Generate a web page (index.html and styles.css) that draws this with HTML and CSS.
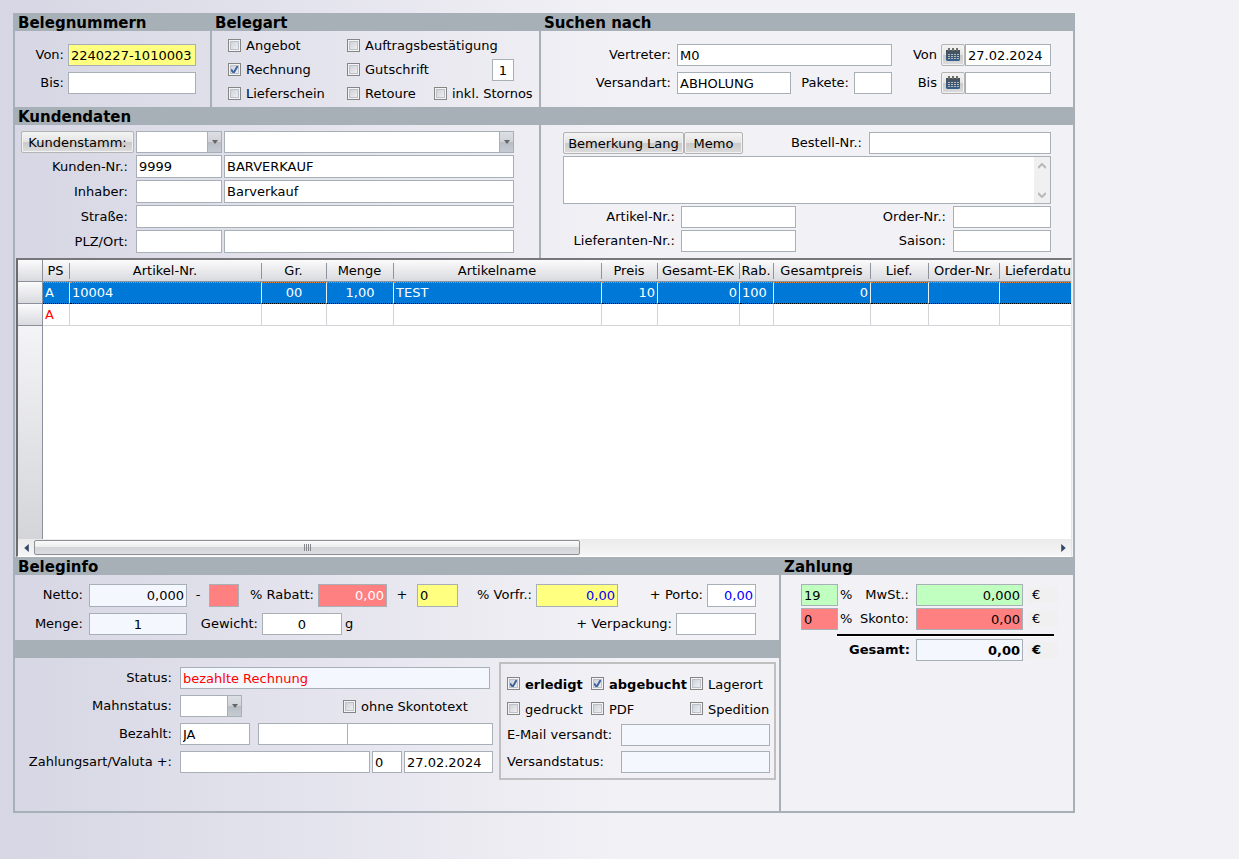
FILE: index.html
```html
<!DOCTYPE html>
<html lang="de">
<head>
<meta charset="utf-8">
<title>Belegsuche</title>
<link rel="stylesheet" href="styles.css">
</head>
<body>
<svg class="defs" aria-hidden="true">
  <linearGradient id="cal-fill" x1="0" y1="0" x2="0" y2="1"><stop offset="0" stop-color="#4a5058"/><stop offset="1" stop-color="#35608f"/></linearGradient>
  <symbol id="calendar" viewBox="0 0 16 16">
    <path d="M1 3h14v10l-1 1H2l-1-1z" fill="url(#cal-fill)"/>
    <path d="M3 1h2v3H3zM7 1h2v3H7zM11 1h2v3h-2z" fill="#6d6f68"/>
    <path d="M3 7h2v1H3zM6 7h2v1H6zM9 7h2v1H9zM12 7h2v1h-2zM3 9h2v1H3zM6 9h2v1H6zM9 9h2v1H9zM12 9h2v1h-2zM3 11h2v1H3zM6 11h2v1H6zM9 11h2v1H9zM12 11h2v1h-2z" fill="#b9b9b4"/>
  </symbol>
</svg>
<main class="frame">
  <div class="bar bar-search">
    <h2>Belegnummern</h2><h2>Belegart</h2><h2>Suchen nach</h2>
  </div>
  <div class="row row-search">
    <section class="numbers">
      <label for="nr-von">Von:</label><input class="field yellow" id="nr-von" value="2240227-1010003">
      <label for="nr-bis">Bis:</label><input class="field" id="nr-bis">
    </section>
    <section class="kinds">
      <label class="check"><input type="checkbox">Angebot</label>
      <label class="check span2"><input type="checkbox">Auftragsbestätigung</label>
      <label class="check"><input type="checkbox" checked>Rechnung</label>
      <label class="check"><input type="checkbox">Gutschrift</label>
      <input class="field center count" aria-label="Anzahl" value="1">
      <label class="check"><input type="checkbox">Lieferschein</label>
      <label class="check"><input type="checkbox">Retoure</label>
      <label class="check"><input type="checkbox">inkl. Stornos</label>
    </section>
    <section class="lookup">
      <label for="vertreter">Vertreter:</label>
      <input class="field" id="vertreter" value="M0">
      <label for="date-von">Von</label>
      <button class="btn icon" aria-label="Kalender Von"><svg><use href="#calendar"/></svg></button>
      <input class="field" id="date-von" value="27.02.2024">
      <label for="versandart">Versandart:</label>
      <div class="shipping">
        <input class="field" id="versandart" value="ABHOLUNG">
        <label for="pakete">Pakete:</label>
        <input class="field packages" id="pakete">
      </div>
      <label for="date-bis">Bis</label>
      <button class="btn icon" aria-label="Kalender Bis"><svg><use href="#calendar"/></svg></button>
      <input class="field" id="date-bis">
    </section>
  </div>

  <div class="bar"><h2>Kundendaten</h2></div>
  <div class="row row-customer">
    <section class="customer">
      <button class="btn">Kundenstamm:</button>
      <span class="combo"><select aria-label="Kundennummer wählen"><option></option></select></span>
      <span class="combo"><select aria-label="Kundenname wählen"><option></option></select></span>
      <label for="kunden-nr">Kunden-Nr.:</label>
      <input class="field" id="kunden-nr" value="9999">
      <input class="field" aria-label="Kundenname" value="BARVERKAUF">
      <label for="inhaber">Inhaber:</label>
      <input class="field" id="inhaber">
      <input class="field" aria-label="Inhabername" value="Barverkauf">
      <label for="strasse">Straße:</label>
      <input class="field span2" id="strasse">
      <label for="plz">PLZ/Ort:</label>
      <input class="field" id="plz">
      <input class="field" aria-label="Ort">
    </section>
    <section class="order">
      <div class="line">
        <button class="btn remark">Bemerkung Lang</button><button class="btn memo">Memo</button>
        <label class="push" for="bestell-nr">Bestell-Nr.:</label>
        <input class="field" id="bestell-nr">
      </div>
      <div class="memo-box">
        <textarea aria-label="Bemerkung"></textarea>
        <span class="vscroll" aria-hidden="true">
          <svg viewBox="0 0 8 6"><path d="M0 5 4 1 8 5" /></svg>
          <svg viewBox="0 0 8 6"><path d="M0 1 4 5 8 1" /></svg>
        </span>
      </div>
      <div class="line pair">
        <label for="artikel-nr">Artikel-Nr.:</label><input class="field" id="artikel-nr">
        <label class="push" for="order-nr">Order-Nr.:</label><input class="field short" id="order-nr">
      </div>
      <div class="line pair">
        <label for="lief-nr">Lieferanten-Nr.:</label><input class="field" id="lief-nr">
        <label class="push" for="saison">Saison:</label><input class="field short" id="saison">
      </div>
    </section>
  </div>

  <div class="grid-box">
    <div class="grid-view">
      <table>
        <colgroup>
          <col class="c-head"><col class="c-ps"><col class="c-art"><col class="c-gr"><col class="c-menge"><col class="c-name"><col class="c-preis"><col class="c-ek"><col class="c-rab"><col class="c-ges"><col class="c-lief"><col class="c-order"><col>
        </colgroup>
        <thead>
          <tr><th></th><th>PS</th><th>Artikel-Nr.</th><th>Gr.</th><th>Menge</th><th>Artikelname</th><th>Preis</th><th>Gesamt-EK</th><th>Rab.</th><th>Gesamtpreis</th><th>Lief.</th><th>Order-Nr.</th><th class="left">Lieferdatu</th></tr>
        </thead>
        <tbody>
          <tr class="selected"><th scope="row"></th><td>A</td><td>10004</td><td class="center">00</td><td class="center">1,00</td><td>TEST</td><td class="right">10</td><td class="right">0</td><td>100</td><td class="right">0</td><td></td><td></td><td></td></tr>
          <tr><th scope="row"></th><td class="red-text">A</td><td></td><td></td><td></td><td></td><td></td><td></td><td></td><td></td><td></td><td></td><td></td></tr>
        </tbody>
      </table>
      <div class="gutter"></div>
    </div>
    <div class="hscroll">
      <button aria-label="Nach links"><svg viewBox="0 0 4 7"><path d="M4 0v7L0 3.500z"/></svg></button>
      <div class="track"><div class="thumb"><i></i></div></div>
      <button aria-label="Nach rechts"><svg viewBox="0 0 4 7"><path d="M0 0v7l4-3.500z"/></svg></button>
    </div>
  </div>

  <div class="row row-bottom">
    <div class="info">
      <div class="bar"><h2>Beleginfo</h2></div>
      <section class="totals">
        <div class="line">
          <label class="w-first" for="netto">Netto:</label><input class="field calc right w-98" id="netto" value="0,000">
          <span class="op">-</span><input class="field red w-30" id="rabatt-p" aria-label="Rabatt Prozent">
          <label class="w-rabatt" for="rabatt">% Rabatt:</label><input class="field red right light w-69" id="rabatt" value="0,00">
          <span class="op plus">+</span><input class="field yellow w-41" aria-label="Vorfracht Prozent" value="0">
          <label class="w-vorfr" for="vorfr">% Vorfr.:</label><input class="field yellow right blue-text w-82" id="vorfr" value="0,00">
          <label class="push" for="porto">+ Porto:</label><input class="field right blue-text w-49" id="porto" value="0,00">
        </div>
        <div class="line">
          <label class="w-first" for="menge">Menge:</label><input class="field calc center w-98" id="menge" value="1">
          <label class="w-gewicht" for="gewicht">Gewicht:</label><input class="field center w-80" id="gewicht" value="0">
          <span class="unit">g</span>
          <label class="push" for="verpackung">+ Verpackung:</label><input class="field w-80" id="verpackung">
        </div>
      </section>
      <div class="bar"></div>
      <section class="status">
        <div class="status-form">
          <label for="status">Status:</label>
          <div class="line"><input class="field calc red-text status-field" id="status" value="bezahlte Rechnung"></div>
          <label for="mahn">Mahnstatus:</label>
          <div class="line"><span class="combo w-62"><select id="mahn"><option></option></select></span>
            <label class="check no-skonto"><input type="checkbox">ohne Skontotext</label></div>
          <label for="bezahlt">Bezahlt:</label>
          <div class="line"><input class="field w-70" id="bezahlt" value="JA"><input class="field paid-date" aria-label="Bezahlt am"><input class="field grow" aria-label="Bezahlt Notiz"></div>
          <label for="zahlart">Zahlungsart/Valuta +:</label>
          <div class="line gap2"><input class="field grow" id="zahlart"><input class="field w-30" aria-label="Valuta Tage" value="0"><input class="field valuta-date" aria-label="Valuta Datum" value="27.02.2024"></div>
        </div>
        <div class="flags">
          <div class="flag-grid">
            <label class="check bold"><input type="checkbox" checked>erledigt</label>
            <label class="check bold"><input type="checkbox" checked>abgebucht</label>
            <label class="check"><input type="checkbox">Lagerort</label>
            <label class="check"><input type="checkbox">gedruckt</label>
            <label class="check"><input type="checkbox">PDF</label>
            <label class="check"><input type="checkbox">Spedition</label>
          </div>
          <div class="flag-fields">
            <label for="mail">E-Mail versandt:</label><input class="field calc" id="mail">
            <label for="versand">Versandstatus:</label><input class="field calc" id="versand">
          </div>
        </div>
      </section>
    </div>
    <div class="payment">
      <div class="bar"><h2>Zahlung</h2></div>
      <section class="pay-grid">
        <input class="field green" aria-label="MwSt. Prozent" value="19">
        <label for="mwst"><span>%</span>MwSt.:</label>
        <input class="field green right" id="mwst" value="0,000"><span class="euro">€</span>
        <input class="field red" aria-label="Skonto Prozent" value="0">
        <label for="skonto"><span>%</span>Skonto:</label>
        <input class="field red right" id="skonto" value="0,00"><span class="euro">€</span>
        <hr>
        <label class="bold total" for="gesamt">Gesamt:</label>
        <input class="field calc right bold" id="gesamt" value="0,00"><span class="euro bold">€</span>
      </section>
    </div>
  </div>
</main>
</body>
</html>
```
FILE: styles.css
```css
:root {
  --line: #a8b0b7;
  --calc: #f4f7fd;
  --chrome: linear-gradient(#fbfbfc, #d9dadf);
}
* { box-sizing: border-box; }
body {
  margin: 0;
  padding: 13px;
  min-height: 100vh;
  background: linear-gradient(90deg, #d6d6e4, #f2f1f6 620px);
  font: 13px/16px Verdana, "DejaVu Sans", sans-serif;
  color: #000;
}
.defs { position: absolute; width: 0; height: 0; }
.frame {
  max-width: 1062px;
  border: 2px solid var(--line);
  border-top: 0;
}
input, select, textarea, button { font: inherit; color: inherit; margin: 0; min-width: 0; }
label { white-space: nowrap; }

.bar { height: 18px; background: var(--line); padding-left: 3px; }
h2 { margin: 0; font-size: 15px; line-height: 20px; font-weight: bold; white-space: nowrap; }
.bar-search, .row-search { display: grid; grid-template-columns: 197px 329px minmax(0, 1fr); }
.bar-search { padding-left: 0; }
.bar-search h2 { padding-left: 3px; }

.field {
  height: 22px;
  width: 100%;
  padding: 0 2px;
  border: 1px solid var(--line);
  border-radius: 0;
  background: #fff;
}
.field.yellow { background: #ffff80; }
.field.green { background: #c0ffc0; }
.field.red { background: #ff8080; }
.field.calc { background: var(--calc); }
.center { text-align: center; }
.right { text-align: right; }
.left { text-align: left; }
.field.light { color: #fff; }
.red-text { color: #f00; }
.blue-text { color: #00f; }
.bold { font-weight: bold; }
.span2 { grid-column: span 2; }

.check { display: flex; align-items: center; gap: 5px; }
.check input {
  appearance: none;
  flex: none;
  width: 13px;
  height: 13px;
  margin-bottom: 2px;
  border: 1px solid #858585;
  box-shadow: inset 0 0 0 1px #f4f4f4, inset 0 0 0 2px #bcc0c8;
  background: linear-gradient(135deg, #c6cad3, #f6f6f7);
}
.check input:checked {
  background: url("data:image/svg+xml,%3Csvg xmlns='http://www.w3.org/2000/svg' viewBox='0 0 11 11'%3E%3Cpath d='M2 5.500 4.700 8.800 9 1.200' fill='none' stroke='%233f65a0' stroke-width='2'/%3E%3C/svg%3E") center / 11px no-repeat, linear-gradient(135deg, #c6cad3, #f6f6f7);
}

.btn {
  height: 22px;
  padding: 1px 0 0;
  border: 1px solid #b4b4b4;
  border-radius: 2px;
  box-shadow: inset 0 0 0 1px #f2f2f2;
  background: linear-gradient(#f4f4f4, #e4e4e4 49%, #c9c9c9 50%, #dcdcdc);
  white-space: nowrap;
}
.icon { display: grid; place-items: center; padding: 0; }
.icon svg { width: 16px; height: 16px; }

.combo { position: relative; display: block; }
.combo select {
  appearance: none;
  display: block;
  width: 100%;
  height: 22px;
  border: 1px solid var(--line);
  border-radius: 0;
  background: #fff;
}
.combo::before {
  content: "";
  position: absolute;
  inset: 1px 1px 1px auto;
  width: 13px;
  border-left: 1px solid var(--line);
  background: linear-gradient(#dcdfe3, #cfd3d8 49%, #b8bdc5 50%, #c6cad1);
  pointer-events: none;
}
.combo::after {
  content: "";
  position: absolute;
  right: 4px;
  top: 9px;
  border: 3px solid transparent;
  border-top: 4px solid #666;
  border-bottom: 0;
  pointer-events: none;
}

.row-search > section { min-height: 76px; }
.numbers {
  display: grid;
  grid-template-columns: 49px 128px;
  gap: 6px 4px;
  align-content: start;
  align-items: center;
  padding-top: 13px;
}
.numbers label { text-align: right; }
.row-search .kinds {
  display: grid;
  grid-template-columns: 119px 87px minmax(0, 1fr);
  grid-template-rows: repeat(3, 24px);
  align-items: center;
  padding: 3px 0 1px 16px;
  border-left: 2px solid var(--line);
  margin-left: -2px;
}
.count { width: 22px; justify-self: end; margin-right: 27px; }
.row-search .lookup {
  display: grid;
  grid-template-columns: 136px minmax(0, 1fr) 49px 24px 86px;
  row-gap: 6px;
  align-content: start;
  align-items: center;
  padding: 13px 22px 0 0;
  border-left: 2px solid var(--line);
  margin-left: -2px;
}
.lookup > label { text-align: right; padding-right: 6px; }
.lookup > label[for^="date"] { padding-right: 4px; }
.shipping { display: flex; align-items: center; }
.shipping label { padding: 0 5px 0 10px; }
.packages { flex: 0 0 38px; }

.row-customer { display: grid; grid-template-columns: 524px minmax(0, 1fr); }
.customer {
  display: grid;
  grid-template-columns: 113px 86px minmax(0, 1fr);
  gap: 2px;
  align-items: center;
  padding: 6px 25px 5px 6px;
}
.customer .field { height: 23px; }
.customer label { text-align: right; padding: 1px 6px 0 0; }
.row-customer .order {
  display: flex;
  flex-direction: column;
  gap: 2px;
  padding: 7px 22px 6px;
  border-left: 2px solid var(--line);
}
.line { display: flex; align-items: center; }
.line > * { flex: none; }
.push { margin-left: auto; }
.remark { width: 121px; }
.memo { width: 59px; }
.order .push { padding-right: 7px; }
#bestell-nr { width: 182px; }
.memo-box { display: flex; height: 48px; border: 1px solid var(--line); background: #fff; }
.memo-box textarea { flex: 1; border: 0; padding: 2px; resize: none; overflow: hidden; background: none; }
.vscroll {
  width: 16px;
  background: #f0f0f0;
  display: flex;
  flex-direction: column;
  justify-content: space-between;
  align-items: center;
  padding: 6px 0 5px;
}
.vscroll svg { width: 8px; height: 6px; fill: none; stroke: #b8b8b8; stroke-width: 2; }
.pair label:first-child { width: 118px; padding-right: 6px; text-align: right; }
.pair .field { width: 115px; }
.pair .short { width: 98px; }

.grid-box {
  margin: 0 1px;
  border: 2px solid #6b6b70;
  border-top-color: #77777b;
  border-right: 1px solid #e4e4e4;
  border-bottom: 1px solid #fff;
  background: #fff;
}
.grid-view { height: 279px; overflow: hidden; display: flex; flex-direction: column; }
table { width: 100%; table-layout: fixed; border-collapse: separate; border-spacing: 0; flex: none; }
.c-head { width: 25px; }
.c-ps { width: 27px; }
.c-art { width: 192px; }
.c-gr { width: 65px; }
.c-menge { width: 67px; }
.c-name { width: 208px; }
.c-preis { width: 56px; }
.c-ek { width: 82px; }
.c-rab { width: 34px; }
.c-ges { width: 97px; }
.c-lief { width: 58px; }
.c-order { width: 71px; }
th, td { height: 22px; padding: 0; white-space: nowrap; overflow: hidden; font-weight: normal; }
thead th {
  border-bottom: 1px solid #8b919c;
  padding-right: 2px;
  background: linear-gradient(#8e949e, #8e949e) right 50% / 1px 16px no-repeat, var(--chrome);
}
thead .left { padding-left: 5px; background: var(--chrome); }
th:first-child {
  background: var(--chrome);
  border-right: 1px solid #8b919c;
  border-bottom: 1px solid #8b919c;
}
td { padding: 0 2px; border-right: 1px solid #d4d4d8; border-bottom: 1px solid #d4d4d8; }
td:last-child { border-right: 0; }
.selected td {
  background: #0078d7;
  color: #fff;
  border-top: 1px dotted #e08a3c;
  border-bottom: 1px dotted #000;
  border-right-color: #e8f0fa;
}
.gutter { flex: 1; width: 25px; border-right: 1px solid #8b919c; background: linear-gradient(#f4f4f6, #d4d5d9); }
.hscroll { display: flex; height: 17px; background: linear-gradient(#ebebeb, #f6f6f6); }
.hscroll button { width: 16px; border: 0; padding: 0; background: none; display: grid; place-items: center; }
.hscroll svg { width: 5px; height: 8px; fill: #34496a; }
.track { flex: 1; padding: 1px 0; }
.thumb {
  width: 53.5%;
  height: 15px;
  border: 1px solid #8f9096;
  border-radius: 2px;
  background: linear-gradient(#fafafa, #ededee 49%, #d4d5d8 50%, #dcdde0);
  display: grid;
  place-items: center;
}
.thumb i { width: 7px; height: 7px; background: repeating-linear-gradient(90deg, #85868c 0 1px, transparent 1px 2px); }

.row-bottom { display: grid; grid-template-columns: minmax(0, 1fr) 294px; min-height: 254px; }
.info { display: flex; flex-direction: column; }
.totals { display: flex; flex-direction: column; gap: 6px; padding: 9px 23px 5px 0; }
.totals .line:first-child { height: 23px; align-items: stretch; }
.totals .line:first-child .field { height: auto; }
.totals .line:first-child label, .op { padding-top: 3px; }
.totals label { text-align: right; padding-right: 4px; }
.totals .w-first { width: 74px; padding-right: 6px; }
.w-rabatt { width: 79px; }
.w-vorfr { width: 78px; }
.w-gewicht { width: 75px; }
.op { width: 22px; text-align: center; }
.plus { width: 30px; }
.unit { padding-left: 3px; }
.w-98 { width: 98px; }
.w-82 { width: 82px; }
.w-80 { width: 80px; }
.w-70 { width: 70px; }
.w-69 { width: 69px; }
.w-62 { width: 62px; }
.w-49 { width: 49px; }
.w-41 { width: 41px; }
.w-30 { width: 30px; }

.status { display: flex; flex: 1; align-items: flex-start; gap: 6px; padding: 4px 3px 0 0; }
.status-form {
  flex: 1;
  min-width: 0;
  display: grid;
  grid-template-columns: 165px minmax(0, 1fr);
  row-gap: 6px;
  align-items: center;
  padding-top: 5px;
}
.status-form > label { text-align: right; padding-right: 8px; }
.status-field { width: 310px; }
.no-skonto { margin-left: 101px; padding-top: 2px; }
.paid-date { width: 90px; margin: 0 -1px 0 8px; }
.line > .grow { flex: 1; }
.gap2 { gap: 2px; }
.valuta-date { width: 89px; }
.flags { width: 277px; border: 2px solid #c0c0c0; padding: 8px 4px 5px 6px; }
.flag-grid { display: grid; grid-template-columns: 84px 99px minmax(0, 1fr); grid-auto-rows: 25px; }
.flag-fields { display: grid; grid-template-columns: 114px minmax(0, 1fr); row-gap: 5px; align-items: center; padding-top: 2px; }

.payment .bar { padding-left: 5px; }
.payment { display: flex; flex-direction: column; }
.pay-grid {
  flex: 1;
  border-left: 2px solid var(--line);
  display: grid;
  grid-template-columns: 37px 78px minmax(0, 1fr) 35px;
  gap: 2px 0;
  align-content: start;
  align-items: center;
  padding: 9px 15px 0 20px;
}
.pay-grid label { display: flex; justify-content: space-between; padding: 0 7px 0 2px; }
.pay-grid .total { grid-column: span 2; justify-content: flex-end; padding-right: 6px; }
.euro { margin-left: 4px; padding-left: 5px; background: #f0f0f0; }
hr { grid-column: 1 / -1; justify-self: stretch; height: 3px; margin: 2px 4px 0 36px; border: 0; border-top: 2px solid #000; background: #fff; }
```
